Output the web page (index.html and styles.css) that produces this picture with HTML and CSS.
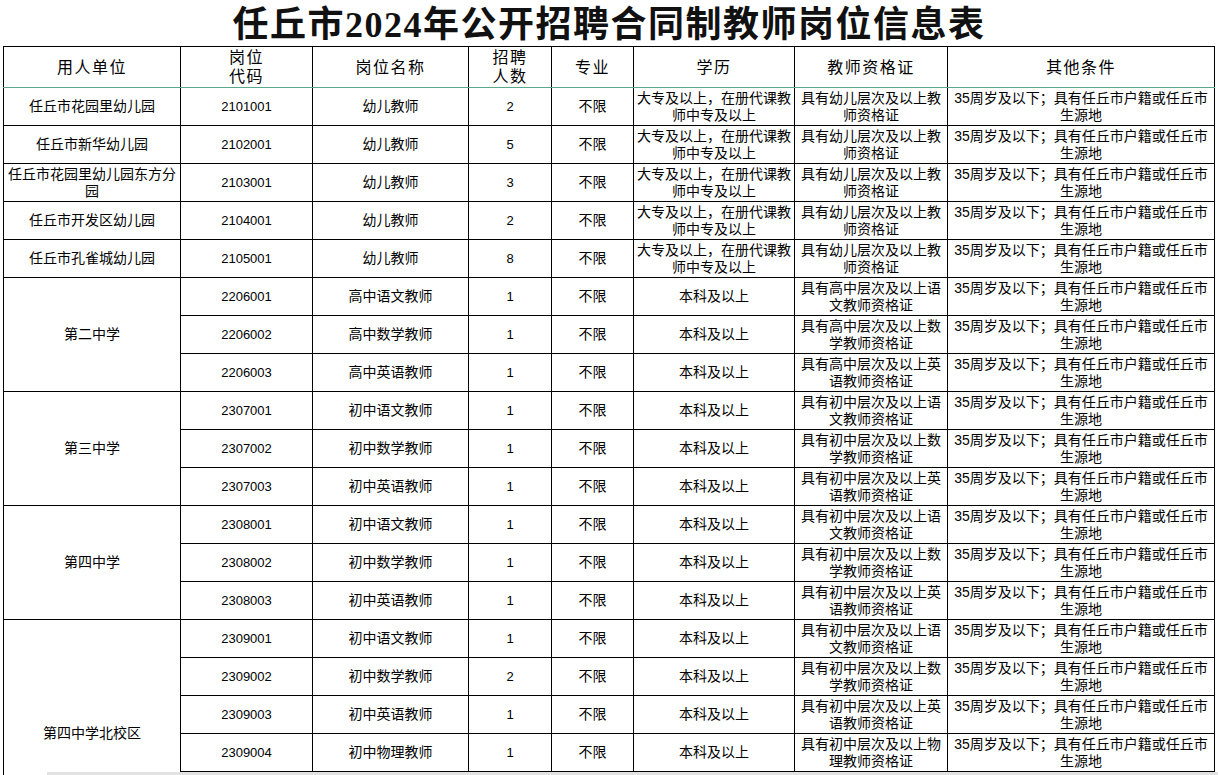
FILE: index.html
```html
<!DOCTYPE html>
<html lang="zh-CN">
<head>
<meta charset="utf-8">
<title>任丘市2024年公开招聘合同制教师岗位信息表</title>
<link rel="stylesheet" href="styles.css">
</head>
<body>
<h1 class="title">任丘市2024年公开招聘合同制教师岗位信息表</h1>
<table class="sheet">
  <colgroup>
    <col class="c-unit"><col class="c-code"><col class="c-name"><col class="c-num"><col class="c-major"><col class="c-edu"><col class="c-cert"><col class="c-other">
  </colgroup>
  <thead>
    <tr class="head">
      <th>用人单位</th><th>岗位<br>代码</th><th>岗位名称</th><th>招聘<br>人数</th><th>专业</th><th>学历</th><th>教师资格证</th><th>其他条件</th>
    </tr>
  </thead>
  <tbody>
    <tr><td>任丘市花园里幼儿园</td><td class="num">2101001</td><td>幼儿教师</td><td class="num">2</td><td>不限</td><td>大专及以上，在册代课教师中专及以上</td><td>具有幼儿层次及以上教师资格证</td><td>35周岁及以下；具有任丘市户籍或任丘市生源地</td></tr>
    <tr><td>任丘市新华幼儿园</td><td class="num">2102001</td><td>幼儿教师</td><td class="num">5</td><td>不限</td><td>大专及以上，在册代课教师中专及以上</td><td>具有幼儿层次及以上教师资格证</td><td>35周岁及以下；具有任丘市户籍或任丘市生源地</td></tr>
    <tr><td>任丘市花园里幼儿园东方分园</td><td class="num">2103001</td><td>幼儿教师</td><td class="num">3</td><td>不限</td><td>大专及以上，在册代课教师中专及以上</td><td>具有幼儿层次及以上教师资格证</td><td>35周岁及以下；具有任丘市户籍或任丘市生源地</td></tr>
    <tr><td>任丘市开发区幼儿园</td><td class="num">2104001</td><td>幼儿教师</td><td class="num">2</td><td>不限</td><td>大专及以上，在册代课教师中专及以上</td><td>具有幼儿层次及以上教师资格证</td><td>35周岁及以下；具有任丘市户籍或任丘市生源地</td></tr>
    <tr><td>任丘市孔雀城幼儿园</td><td class="num">2105001</td><td>幼儿教师</td><td class="num">8</td><td>不限</td><td>大专及以上，在册代课教师中专及以上</td><td>具有幼儿层次及以上教师资格证</td><td>35周岁及以下；具有任丘市户籍或任丘市生源地</td></tr>

    <tr><td rowspan="3">第二中学</td><td class="num">2206001</td><td>高中语文教师</td><td class="num">1</td><td>不限</td><td>本科及以上</td><td>具有高中层次及以上语文教师资格证</td><td>35周岁及以下；具有任丘市户籍或任丘市生源地</td></tr>
    <tr><td class="num">2206002</td><td>高中数学教师</td><td class="num">1</td><td>不限</td><td>本科及以上</td><td>具有高中层次及以上数学教师资格证</td><td>35周岁及以下；具有任丘市户籍或任丘市生源地</td></tr>
    <tr><td class="num">2206003</td><td>高中英语教师</td><td class="num">1</td><td>不限</td><td>本科及以上</td><td>具有高中层次及以上英语教师资格证</td><td>35周岁及以下；具有任丘市户籍或任丘市生源地</td></tr>

    <tr><td rowspan="3">第三中学</td><td class="num">2307001</td><td>初中语文教师</td><td class="num">1</td><td>不限</td><td>本科及以上</td><td>具有初中层次及以上语文教师资格证</td><td>35周岁及以下；具有任丘市户籍或任丘市生源地</td></tr>
    <tr><td class="num">2307002</td><td>初中数学教师</td><td class="num">1</td><td>不限</td><td>本科及以上</td><td>具有初中层次及以上数学教师资格证</td><td>35周岁及以下；具有任丘市户籍或任丘市生源地</td></tr>
    <tr><td class="num">2307003</td><td>初中英语教师</td><td class="num">1</td><td>不限</td><td>本科及以上</td><td>具有初中层次及以上英语教师资格证</td><td>35周岁及以下；具有任丘市户籍或任丘市生源地</td></tr>

    <tr><td rowspan="3">第四中学</td><td class="num">2308001</td><td>初中语文教师</td><td class="num">1</td><td>不限</td><td>本科及以上</td><td>具有初中层次及以上语文教师资格证</td><td>35周岁及以下；具有任丘市户籍或任丘市生源地</td></tr>
    <tr><td class="num">2308002</td><td>初中数学教师</td><td class="num">1</td><td>不限</td><td>本科及以上</td><td>具有初中层次及以上数学教师资格证</td><td>35周岁及以下；具有任丘市户籍或任丘市生源地</td></tr>
    <tr><td class="num">2308003</td><td>初中英语教师</td><td class="num">1</td><td>不限</td><td>本科及以上</td><td>具有初中层次及以上英语教师资格证</td><td>35周岁及以下；具有任丘市户籍或任丘市生源地</td></tr>

    <tr><td rowspan="6">第四中学北校区</td><td class="num">2309001</td><td>初中语文教师</td><td class="num">1</td><td>不限</td><td>本科及以上</td><td>具有初中层次及以上语文教师资格证</td><td>35周岁及以下；具有任丘市户籍或任丘市生源地</td></tr>
    <tr><td class="num">2309002</td><td>初中数学教师</td><td class="num">2</td><td>不限</td><td>本科及以上</td><td>具有初中层次及以上数学教师资格证</td><td>35周岁及以下；具有任丘市户籍或任丘市生源地</td></tr>
    <tr><td class="num">2309003</td><td>初中英语教师</td><td class="num">1</td><td>不限</td><td>本科及以上</td><td>具有初中层次及以上英语教师资格证</td><td>35周岁及以下；具有任丘市户籍或任丘市生源地</td></tr>
    <tr><td class="num">2309004</td><td>初中物理教师</td><td class="num">1</td><td>不限</td><td>本科及以上</td><td>具有初中层次及以上物理教师资格证</td><td>35周岁及以下；具有任丘市户籍或任丘市生源地</td></tr>
    <tr class="more"><td></td><td></td><td></td><td></td><td></td><td></td><td></td></tr>
    <tr class="more"><td></td><td></td><td></td><td></td><td></td><td></td><td></td></tr>
  </tbody>
</table>
<div class="hscroll"></div>
</body>
</html>
```

FILE: styles.css
```css
html, body {
  margin: 0;
  padding: 0;
  background: #ffffff;
}

body {
  font-family: "Liberation Sans", "Noto Sans CJK SC", sans-serif;
  color: #000;
  overflow: hidden;
  height: 775px;
}

.title {
  margin: 0;
  height: 46px;
  line-height: 50px;
  text-align: center;
  font-family: "Liberation Serif", "Noto Sans CJK SC", serif;
  font-size: 36px;
  font-weight: 700;
  letter-spacing: 1.5px;
  color: #111;
  white-space: nowrap;
}

.sheet {
  margin-left: 3px;
  width: 1211px;
  border-collapse: collapse;
  table-layout: fixed;
  font-size: 14px;
}

.c-unit { width: 177px; }
.c-code { width: 132px; }
.c-name { width: 156px; }
.c-num { width: 83px; }
.c-major { width: 82px; }
.c-edu { width: 161px; }
.c-cert { width: 153px; }
.c-other { width: 267px; }

.sheet th,
.sheet td {
  border: 1px solid #000;
  padding: 0 2px;
  text-align: center;
  vertical-align: middle;
  line-height: 17px;
  overflow: hidden;
}

.sheet th {
  font-weight: 400;
  font-size: 16px;
  letter-spacing: 1.5px;
  line-height: 19px;
  height: 41px;
  box-sizing: border-box;
}

.sheet .head th {
  border-bottom: 1px solid #5aa98c;
}

.sheet td {
  height: 38px;
  box-sizing: border-box;
}

.sheet td.num {
  font-size: 13px;
}

.hscroll {
  position: fixed;
  left: 47px;
  right: 0;
  bottom: 0;
  height: 3px;
  background: #e2e2e2;
}
```
